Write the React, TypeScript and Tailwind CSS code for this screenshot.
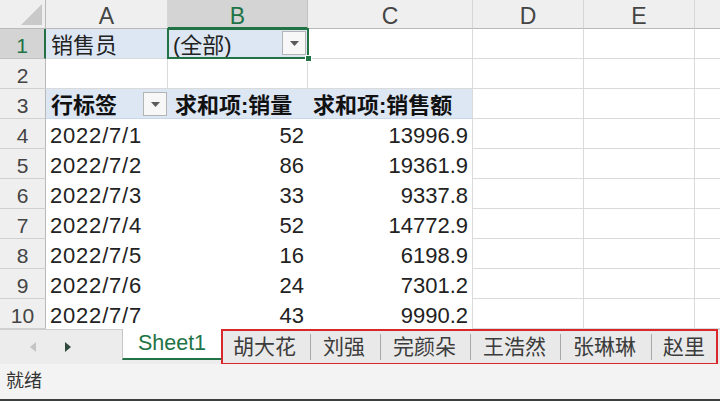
import React from "react";

const FONT = { fontFamily: '"Liberation Sans", "Noto Sans CJK SC", sans-serif' };

const rows = [
  ["2022/7/1", "52", "13996.9"],
  ["2022/7/2", "86", "19361.9"],
  ["2022/7/3", "33", "9337.8"],
  ["2022/7/4", "52", "14772.9"],
  ["2022/7/5", "16", "6198.9"],
  ["2022/7/6", "24", "7301.2"],
  ["2022/7/7", "43", "9990.2"],
];

function DropBtn() {
  return (
    <div className="w-[24px] h-[24px] border border-[#b4b4b4] bg-[#f7f7f7] flex items-center justify-center">
      <svg width="9" height="5" viewBox="0 0 9 5">
        <path d="M0 0 L9 0 L4.5 5 Z" fill="#5a5a5a" />
      </svg>
    </div>
  );
}

const hdr = "bg-[#efefef] border-r border-b border-r-[#d6d6d6] border-b-[#b9b9b9] text-[#444] text-[23px] leading-[26px] pt-[3px] text-center";
const rowHdr = "bg-[#efefef] border-r border-b border-r-[#b9b9b9] border-b-[#d0d0d0] text-[#444] text-[21px] leading-[27px] pt-[3px] text-center";
const cell = "border-r border-b border-[#dadada] text-[22px] leading-[27px] pt-[3px] text-[#222] whitespace-nowrap overflow-hidden";

export default function App() {
  return (
    <div className="w-[720px] h-[401px] flex flex-col bg-white overflow-hidden" style={FONT}>
      <div className="grid grid-cols-[46px_122px_140px_165px_111px_111px_25px] grid-rows-[29px_repeat(10,30px)]">
        {/* header row */}
        <div className="bg-[#efefef] border-r border-b border-r-[#b9b9b9] border-b-[#b9b9b9] relative">
          <svg className="absolute right-[3px] bottom-[3px]" width="21" height="21" viewBox="0 0 21 21">
            <path d="M21 0 L21 21 L0 21 Z" fill="#c9c9c9" />
          </svg>
        </div>
        <div className={hdr}>A</div>
        <div className="bg-[#d4d4d4] border-r border-r-[#c2c2c2] border-b-2 border-b-[#217346] text-[#217346] text-[23px] leading-[26px] pt-[3px] text-center">B</div>
        <div className={hdr}>C</div>
        <div className={hdr}>D</div>
        <div className={hdr}>E</div>
        <div className="bg-[#efefef] border-b border-b-[#b9b9b9]"></div>

        {/* row 1 */}
        <div className="bg-[#d4d4d4] border-r-2 border-r-[#217346] border-b border-b-[#c2c2c2] text-[#217346] text-[21px] leading-[27px] pt-[3px] text-center">1</div>
        <div className={`${cell} bg-[#dde7f4] pl-[5px]`}>销售员</div>
        <div className="relative bg-[#dde7f4] border-b border-[#dadada] text-[22px] leading-[27px] pt-[3px] text-[#222] pl-[5px] flex justify-between pr-[2px]">
          <span>(全部)</span>
          <div className="self-start -mt-[1px]">
            <DropBtn />
          </div>
          <div className="absolute -left-[1px] -top-[1px] -right-[1px] -bottom-[1px] border-2 border-[#217346] pointer-events-none"></div>
          <div className="absolute -right-[4px] -bottom-[4px] w-[7px] h-[7px] bg-[#217346] border border-white"></div>
        </div>
        <div className={cell}></div>
        <div className={cell}></div>
        <div className={cell}></div>
        <div className="border-b border-[#dadada]"></div>

        {/* row 2 */}
        <div className={rowHdr}>2</div>
        <div className={cell}></div>
        <div className={cell}></div>
        <div className={cell}></div>
        <div className={cell}></div>
        <div className={cell}></div>
        <div className="border-b border-[#dadada]"></div>

        {/* row 3 */}
        <div className={rowHdr}>3</div>
        <div className="bg-[#dde7f4] border-b border-[#c9d7ea] text-[22px] leading-[27px] pt-[3px] text-[#111] font-bold pl-[5px] flex justify-between pr-[1px]">
          <span>行标签</span>
          <div className="self-start">
            <DropBtn />
          </div>
        </div>
        <div className="bg-[#dde7f4] border-b border-[#c9d7ea] text-[22px] leading-[27px] pt-[3px] text-[#111] font-bold pl-[7px] whitespace-nowrap">求和项:销量</div>
        <div className="bg-[#dde7f4] border-b border-r border-b-[#c9d7ea] border-r-[#dadada] text-[22px] leading-[27px] pt-[3px] text-[#111] font-bold pl-[5px] whitespace-nowrap">求和项:销售额</div>
        <div className={cell}></div>
        <div className={cell}></div>
        <div className="border-b border-[#dadada]"></div>

        {rows.map((r, i) => (
          <React.Fragment key={i}>
            <div className={rowHdr}>{i + 4}</div>
            <div className="text-[22px] leading-[27px] pt-[3px] text-[#222] pl-[4px] tracking-[0.8px] whitespace-nowrap">{r[0]}</div>
            <div className="text-[22px] leading-[27px] pt-[3px] text-[#222] pr-[4px] text-right">{r[1]}</div>
            <div className="border-r border-[#dadada] text-[22px] leading-[27px] pt-[3px] text-[#222] pr-[4px] text-right">{r[2]}</div>
            <div className={cell}></div>
            <div className={cell}></div>
            <div className="border-b border-[#dadada]"></div>
          </React.Fragment>
        ))}
      </div>

      {/* sheet tab bar */}
      <div className="h-[35px] flex bg-[#ececec] border-t border-[#cfcfcf]">
        <div className="w-[122px] flex items-center">
          <svg className="ml-[30px]" width="6" height="10" viewBox="0 0 6 10">
            <path d="M6 0 L6 10 L0 5 Z" fill="#c4c4c4" />
          </svg>
          <svg className="ml-[29px]" width="6" height="10" viewBox="0 0 6 10">
            <path d="M0 0 L0 10 L6 5 Z" fill="#2f4a3c" />
          </svg>
        </div>
        <div className="w-[99px] h-[31px] -mt-[1px] bg-white border-l border-[#c6c6c6] border-b-2 border-b-[#217346] text-[#217346] text-[21.5px] leading-[28px] text-center">
          Sheet1
        </div>
        <div className="w-[497px] -mt-[1px] h-[36px] border-2 border-[#d9272e] flex items-center overflow-hidden text-[21px] text-[#3c3c3c] bg-[#e9e9e9]">
          <span className="pl-[10px] pr-[14px]">胡大花</span>
          <span className="w-px h-[26px] bg-[#a8a8a8]"></span>
          <span className="pl-[12px] pr-[15px]">刘强</span>
          <span className="w-px h-[26px] bg-[#a8a8a8]"></span>
          <span className="pl-[12px] pr-[14px]">完颜朵</span>
          <span className="w-px h-[26px] bg-[#a8a8a8]"></span>
          <span className="pl-[12px] pr-[14px]">王浩然</span>
          <span className="w-px h-[26px] bg-[#a8a8a8]"></span>
          <span className="pl-[12px] pr-[15px]">张琳琳</span>
          <span className="w-px h-[26px] bg-[#a8a8a8]"></span>
          <span className="pl-[11px] whitespace-nowrap">赵里</span>
        </div>
      </div>

      {/* status bar */}
      <div className="flex-1 bg-[#f3f3f3] border-b-2 border-[#3b3f3d] flex items-center pl-[6px] text-[18px] text-[#333]">
        就绪
      </div>
    </div>
  );
}
